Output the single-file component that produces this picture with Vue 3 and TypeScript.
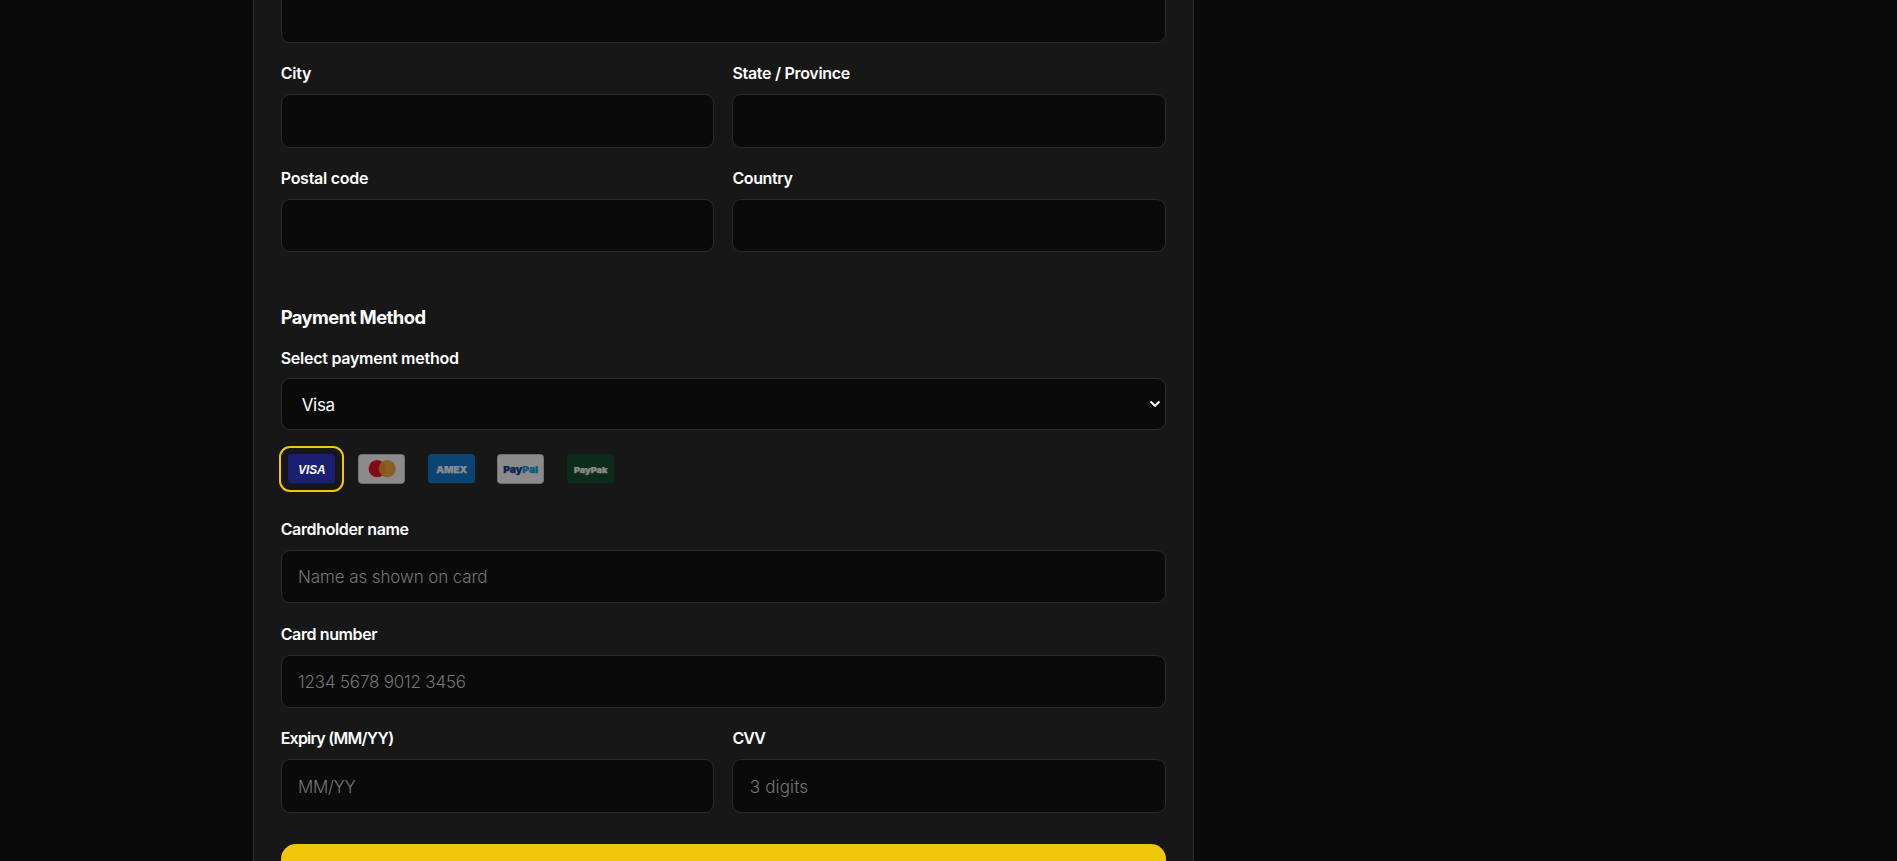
<script setup lang="ts">
import { ref } from 'vue'

interface Field {
  id: string
  label: string
  placeholder?: string
  labelTracking: number
  tracking?: number
}

const addressFields: Field[] = [
  { id: 'city', label: 'City', labelTracking: -0.2 },
  { id: 'state', label: 'State / Province', labelTracking: -0.3 },
  { id: 'postal', label: 'Postal code', labelTracking: -0.26 },
  { id: 'country', label: 'Country', labelTracking: -0.4 },
]

const cardFields: Field[] = [
  { id: 'holder', label: 'Cardholder name', placeholder: 'Name as shown on card', labelTracking: -0.36, tracking: -0.12 },
  { id: 'number', label: 'Card number', placeholder: '1234 5678 9012 3456', labelTracking: -0.39, tracking: -0.2 },
]

const securityFields: Field[] = [
  { id: 'expiry', label: 'Expiry (MM/YY)', placeholder: 'MM/YY', labelTracking: -0.78, tracking: -0.35 },
  { id: 'cvv', label: 'CVV', placeholder: '3 digits', labelTracking: -0.93, tracking: 0.15 },
]

const methods = ['Visa', 'Mastercard', 'American Express', 'PayPal', 'PayPak']
const selected = ref('Visa')

const spacing = (value = 0) => ({ letterSpacing: `${value}px` })
</script>

<template>
  <main class="page">
    <form class="card" @submit.prevent>
      <input class="input first" type="text" aria-label="Address" />

      <div class="grid">
        <div v-for="f in addressFields" :key="f.id" class="field">
          <label :for="f.id" class="label" :style="spacing(f.labelTracking)">{{ f.label }}</label>
          <input :id="f.id" class="input" type="text" />
        </div>
      </div>

      <h2 class="heading">Payment Method</h2>

      <label for="method" class="label" :style="spacing(-0.26)">Select payment method</label>
      <div class="select-wrap">
        <select id="method" v-model="selected" class="select">
          <option v-for="m in methods" :key="m" :value="m">{{ m }}</option>
        </select>
        <svg class="chevron" width="12" height="8" viewBox="0 0 12 8" aria-hidden="true">
          <path d="M1.5 1.6 6 5.8l4.5-4.2" fill="none" stroke="#fff" stroke-width="2.1" />
        </svg>
      </div>

      <div class="logos">
        <button
          v-for="m in methods"
          :key="m"
          type="button"
          class="logo"
          :class="{ active: m === selected }"
          :aria-label="m"
          @click="selected = m"
        >
          <svg v-if="m === 'Visa'" width="47" height="30" viewBox="0 0 47 30">
            <rect width="47" height="29.3" rx="3.6" fill="#1a1f71" />
            <text x="10.2" y="19.8" textLength="27.4" lengthAdjust="spacingAndGlyphs" class="visa">VISA</text>
          </svg>
          <svg v-else-if="m === 'Mastercard'" width="47" height="30" viewBox="0 0 47 30">
            <rect x="0.4" y="0.4" width="46.2" height="29" rx="3.4" fill="#fff" stroke="#ddd" stroke-width="0.8" />
            <circle cx="19.2" cy="14.7" r="8.6" fill="#eb001b" />
            <circle cx="29.3" cy="14.7" r="8.6" fill="#f79e1b" fill-opacity="0.9" />
          </svg>
          <svg v-else-if="m === 'American Express'" width="47" height="30" viewBox="0 0 47 30">
            <rect width="47" height="29.3" rx="3.6" fill="#006fcf" />
            <text x="8.3" y="18.8" textLength="31" lengthAdjust="spacingAndGlyphs" class="brand amex">AMEX</text>
          </svg>
          <svg v-else-if="m === 'PayPal'" width="47" height="30" viewBox="0 0 47 30">
            <rect x="0.4" y="0.4" width="46.2" height="29" rx="3.4" fill="#fff" stroke="#ddd" stroke-width="0.8" />
            <text x="6.2" y="18.7" textLength="35" lengthAdjust="spacingAndGlyphs" class="brand paypal"><tspan class="navy">Pay</tspan><tspan class="sky">Pal</tspan></text>
          </svg>
          <svg v-else width="47" height="30" viewBox="0 0 47 30">
            <rect width="47" height="29.3" rx="3.6" fill="#01411c" />
            <text x="6.9" y="19" textLength="33.6" lengthAdjust="spacingAndGlyphs" class="brand paypak">PayPak</text>
          </svg>
        </button>
      </div>

      <div class="stack">
        <div v-for="f in cardFields" :key="f.id" class="field">
          <label :for="f.id" class="label" :style="spacing(f.labelTracking)">{{ f.label }}</label>
          <input :id="f.id" class="input" type="text" :placeholder="f.placeholder" :style="spacing(f.tracking)" />
        </div>
        <div class="grid inner">
          <div v-for="f in securityFields" :key="f.id" class="field">
            <label :for="f.id" class="label" :style="spacing(f.labelTracking)">{{ f.label }}</label>
            <input :id="f.id" class="input" type="text" :placeholder="f.placeholder" :style="spacing(f.tracking)" />
          </div>
        </div>
      </div>

      <button type="submit" class="submit" aria-label="Submit"></button>
    </form>
  </main>
</template>

<style>
body {
  margin: 0;
  background: #0a0a0a;
}
</style>

<style scoped>
.page {
  height: 861px;
  overflow: hidden;
  background: #0a0a0a;
  color: #fff;
  font-family: Inter, sans-serif;
}

.card {
  display: flex;
  flex-direction: column;
  box-sizing: border-box;
  width: 941px;
  height: 900px;
  margin-left: 253px;
  padding: 0 27px 0 26.7px;
  border: solid #2a2a2a;
  border-width: 0 1px;
  background: #171717;
}

.input,
.select {
  display: block;
  box-sizing: border-box;
  width: 100%;
  height: 53.3px;
  flex: none;
  margin: 0;
  padding: 1px 16.4px 0;
  border: 1px solid #2a2a2a;
  border-radius: 9px;
  outline: none;
  background: #0a0a0a;
  color: #fff;
  font: 400 17px Inter, sans-serif;
}

.input::placeholder {
  color: #757575;
  font-weight: 300;
  opacity: 1;
}

.first {
  margin-top: -10.2px;
}

.grid {
  display: grid;
  grid-template-columns: 1fr 1fr;
  gap: 18.3px 18.2px;
  margin-top: 18.2px;
}

.inner {
  margin-top: 0;
}

.label {
  display: block;
  height: 24px;
  font-size: 16px;
  font-weight: 600;
  line-height: 24px;
  white-space: nowrap;
}

.field .label {
  margin-bottom: 9px;
}

.heading {
  margin: 53px 0 17px;
  font-size: 18.4px;
  font-weight: 700;
  line-height: 24px;
  letter-spacing: -0.56px;
}

.select-wrap {
  position: relative;
  margin-top: 8px;
}

.select {
  height: 52px;
  padding: 1px 20px 0;
  appearance: none;
  letter-spacing: -0.3px;
}

.chevron {
  position: absolute;
  top: 22px;
  right: 5px;
  pointer-events: none;
}

.logos {
  display: flex;
  gap: 4.75px;
  margin: 16px 0 25px -1.7px;
}

.logo {
  display: block;
  box-sizing: border-box;
  width: 65px;
  height: 46px;
  flex: none;
  padding: 6px 7px;
  border: 2px solid transparent;
  border-radius: 11px;
  background: none;
  opacity: 0.5;
}

.logo.active {
  border-color: #f0c808;
  opacity: 1;
}

.logo svg {
  display: block;
}

.visa {
  fill: #fff;
  font: italic 700 12px 'Liberation Sans', sans-serif;
}

.brand {
  fill: #fff;
  stroke: #fff;
  stroke-width: 0.25;
  font-family: Inter, sans-serif;
  font-weight: 900;
}

.amex {
  font-size: 9.2px;
}

.paypal {
  font-size: 9.4px;
}

.navy {
  fill: #003087;
  stroke: #003087;
}

.sky {
  fill: #009cde;
  stroke: #009cde;
}

.paypak {
  font-size: 8.2px;
}

.stack {
  display: flex;
  flex-direction: column;
  gap: 18.3px;
}

.submit {
  height: 56px;
  flex: none;
  margin-top: 31.3px;
  border: 0;
  border-radius: 15px;
  background: #f0c808;
}
</style>
